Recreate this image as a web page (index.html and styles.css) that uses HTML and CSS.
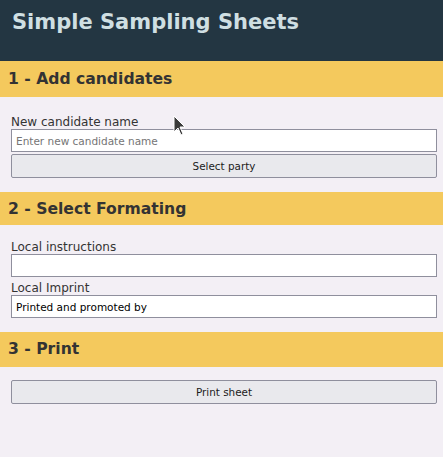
FILE: index.html
```html
<!DOCTYPE html>
<html>
<head>
<meta charset="utf-8">
<link rel="stylesheet" href="styles.css">
</head>
<body>
<header class="top">
  <h1 class="title">Simple Sampling Sheets</h1>
</header>
<section class="step">
  <h2 class="step-head head-1">1 - Add candidates</h2>
  <div class="step-body body-1">
    <label class="field-label">New candidate name</label>
    <input class="text-in" type="text" placeholder="Enter new candidate name">
    <button class="btn">Select party</button>
  </div>
</section>
<section class="step">
  <h2 class="step-head head-2">2 - Select Formating</h2>
  <div class="step-body body-2">
    <label class="field-label">Local instructions</label>
    <input class="text-in" type="text">
    <label class="field-label">Local Imprint</label>
    <input class="text-in" type="text" value="Printed and promoted by">
  </div>
</section>
<section class="step">
  <h2 class="step-head head-3">3 - Print</h2>
  <div class="step-body body-3">
    <button class="btn">Print sheet</button>
  </div>
</section>
<svg class="cursor" width="14" height="22" viewBox="0 0 14 22">
  <path d="M1 1 L1 17 L5 13 L8 20 L10 19 L7 12 L12 12 Z" fill="#3a3a3a" stroke="#ffffff" stroke-width="1"/>
</svg>
</body>
</html>
```
FILE: styles.css
```css
html, body {
  margin: 0;
  padding: 0;
}
body {
  background: #f3eff5;
  font-family: "DejaVu Sans", sans-serif;
  color: #333333;
  min-height: 457px;
  position: relative;
}
.top {
  background: #233642;
  height: 61px;
  box-sizing: border-box;
  padding: 10px 12px 0;
}
.title {
  margin: 0;
  font-size: 21px;
  line-height: 24px;
  font-weight: bold;
  color: #cfdfe2;
}
.step-head {
  margin: 0;
  background: #f4c95d;
  font-size: 15.6px;
  font-weight: bold;
  color: #333333;
  height: 35px;
  line-height: 35px;
  padding: 0 8px;
}
.head-1 {
  height: 36px;
  line-height: 36px;
}
.head-2 {
  height: 33px;
  line-height: 35px;
}
.step-body {
  display: flex;
  flex-direction: column;
  padding: 13px 6px 14px 11px;
}
.body-1 {
  padding-top: 16px;
}
.field-label {
  font-size: 12px;
  line-height: 13px;
  padding-top: 3px;
}
.text-in {
  box-sizing: border-box;
  height: 23px;
  margin: 0 0 2px;
  border: 1px solid #8f8f9d;
  border-radius: 0;
  background: #ffffff;
  font-family: "DejaVu Sans", sans-serif;
  font-size: 10.5px;
  color: #000;
  padding: 0 4px;
}
.text-in:last-child {
  margin-bottom: 0;
}
.text-in::placeholder {
  color: #757575;
}
.btn {
  box-sizing: border-box;
  height: 24px;
  border: 1px solid #8f8f9d;
  border-radius: 2px;
  background: #e9e9ed;
  font-family: "DejaVu Sans", sans-serif;
  font-size: 10.4px;
  color: #1b1b1b;
  padding: 0;
}
.cursor {
  position: absolute;
  left: 173px;
  top: 115px;
}
```
